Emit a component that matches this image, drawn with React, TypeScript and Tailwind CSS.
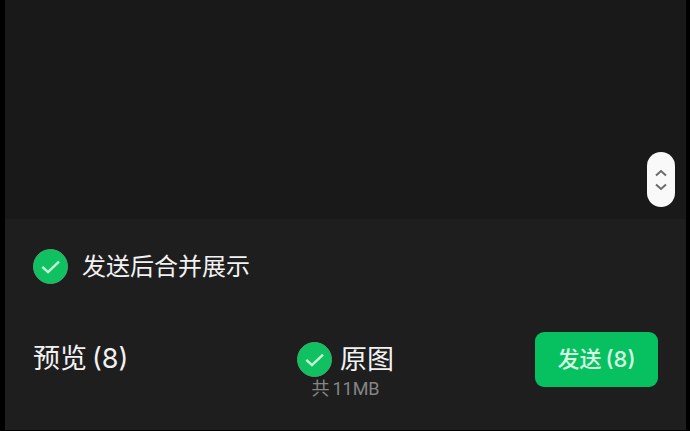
import { useState } from 'react';

interface RoundCheckboxProps {
    id: string;
    checked: boolean;
    onChange: (checked: boolean) => void;
}

function RoundCheckbox({ id, checked, onChange }: RoundCheckboxProps) {
    return (
        <span className="relative block w-[35px] h-[35px] shrink-0">
            <input
                id={id}
                type="checkbox"
                checked={checked}
                onChange={e => onChange(e.target.checked)}
                className="block w-full h-full appearance-none rounded-full border border-[#3fae6c] bg-transparent checked:bg-[#0fc161] cursor-pointer"
            />
            {checked && (
                <svg
                    viewBox="0 0 35 35"
                    fill="none"
                    className="absolute inset-0 w-full h-full pointer-events-none"
                >
                    <path
                        d="M9.3 17.8L15 23.2L26 12.6"
                        stroke="#c4f5d8"
                        strokeWidth="2.4"
                    />
                </svg>
            )}
        </span>
    );
}

export default function App() {
    const [merge, setMerge] = useState(true);
    const [original, setOriginal] = useState(true);
    const count = 8;

    return (
        <div className="min-h-screen flex flex-col bg-black pl-[5px] pr-1 pb-px text-[#f2f2f2] font-['Inter','Noto_Sans_CJK_SC',sans-serif]">
            <main className="flex-1 flex items-end justify-end bg-[#191919] pr-[11px] pb-3">
                <button
                    type="button"
                    aria-label="滚动"
                    className="flex items-center justify-center w-7 h-[55px] rounded-full bg-[#f9f9f9]"
                >
                    <svg width="12" height="22" viewBox="0 0 12 22" fill="none" stroke="#6b6b6b" strokeWidth="2">
                        <path d="M1 6.5L6 2L11 6.5" />
                        <path d="M1 15.5L6 20L11 15.5" />
                    </svg>
                </button>
            </main>

            <footer className="bg-[#1e1e1e] px-7 pt-[30px] pb-[29px]">
                <label htmlFor="merge" className="inline-flex items-center gap-[14px] h-[35px] align-top cursor-pointer">
                    <RoundCheckbox id="merge" checked={merge} onChange={setMerge} />
                    <span className="text-[24px] leading-[35px]">发送后合并展示</span>
                </label>

                <div className="mt-12 grid grid-cols-[1fr_auto_1fr] items-start">
                    <button type="button" className="justify-self-start flex items-center gap-[5px] h-[55px] text-[27px] whitespace-nowrap">
                        <span>预览</span>
                        <span>({count})</span>
                    </button>

                    <div className="flex flex-col items-center pt-[10px]">
                        <label htmlFor="original" className="flex items-center gap-2 cursor-pointer">
                            <RoundCheckbox id="original" checked={original} onChange={setOriginal} />
                            <span className="text-[27px] leading-[35px]">原图</span>
                        </label>
                        <span className="flex gap-[3px] text-[18px] leading-6 text-[#858585]">
                            <span>共</span>
                            <span className="font-['Roboto',sans-serif]">11MB</span>
                        </span>
                    </div>

                    <button
                        type="button"
                        className="justify-self-end flex items-center justify-center gap-1 w-[123px] h-[55px] rounded-[9px] bg-[#07c160] text-[22px] font-medium text-[#d5fae3] whitespace-nowrap"
                    >
                        <span>发送</span>
                        <span>({count})</span>
                    </button>
                </div>
            </footer>
        </div>
    );
}
